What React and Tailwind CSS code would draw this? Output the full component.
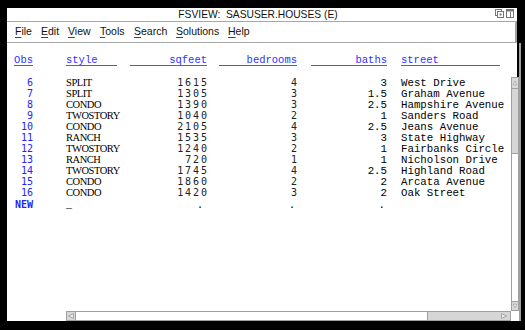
import React from "react";

const rows = [
  ["6", "SPLIT", "1615", "4", "3", "West Drive"],
  ["7", "SPLIT", "1305", "3", "1.5", "Graham Avenue"],
  ["8", "CONDO", "1390", "3", "2.5", "Hampshire Avenue"],
  ["9", "TWOSTORY", "1040", "2", "1", "Sanders Road"],
  ["10", "CONDO", "2105", "4", "2.5", "Jeans Avenue"],
  ["11", "RANCH", "1535", "3", "3", "State Highway"],
  ["12", "TWOSTORY", "1240", "2", "1", "Fairbanks Circle"],
  ["13", "RANCH", "720", "1", "1", "Nicholson Drive"],
  ["14", "TWOSTORY", "1745", "4", "2.5", "Highland Road"],
  ["15", "CONDO", "1860", "2", "2", "Arcata Avenue"],
  ["16", "CONDO", "1420", "3", "2", "Oak Street"],
];

const menu = [
  ["F", "ile", "w-[26px]"],
  ["E", "dit", "w-[27px]"],
  ["V", "iew", "w-[32px]"],
  ["T", "ools", "w-[34px]"],
  ["S", "earch", "w-[42px]"],
  ["S", "olutions", "w-[52px]"],
  ["H", "elp", "w-[30px]"],
];

const mono = "font-['Liberation_Mono',monospace]";
const sansMono = "font-['DejaVu_Sans_Mono',monospace]";

function Row({ r }) {
  return (
    <div className="flex h-[11px] items-baseline leading-[11px] text-black">
      <div className={`w-[26px] text-right text-[10px] text-[#2424ff] ${sansMono}`}>{r[0]}</div>
      <div className="ml-[33px] w-[51px] text-[10.5px] tracking-[-0.45px] font-['Liberation_Serif',serif]">{r[1]}</div>
      <div className={`ml-[13px] w-[77px] text-right text-[10px] text-[#222] ${sansMono}`}>
        <span className="tracking-[1.9px] mr-[-1.9px]">{r[2]}</span>
      </div>
      <div className={`ml-[12px] w-[78px] text-right text-[10px] text-[#222] ${sansMono}`}>
        <span className="tracking-[1.9px] mr-[-1.9px]">{r[3]}</span>
      </div>
      <div className={`ml-[14px] w-[76px] text-right text-[10.75px] ${mono}`}>{r[4]}</div>
      <div className={`ml-[14px] w-[110px] whitespace-nowrap text-[10.75px] ${mono}`}>{r[5]}</div>
    </div>
  );
}

function Arrow({ dir }) {
  const pts = {
    up: "1.5,6.5 4,1.5 6.5,6.5",
    down: "1.5,1.5 4,6.5 6.5,1.5",
    left: "6.5,1.5 1.5,4 6.5,6.5",
    right: "1.5,1.5 6.5,4 1.5,6.5",
  }[dir];
  return (
    <svg width="8" height="8" viewBox="0 0 8 8">
      <polygon points={pts} fill="#e8e8e8" stroke="#9a9a9a" strokeWidth="0.8" />
    </svg>
  );
}

export default function App() {
  return (
    <div className="w-[525px] h-[330px] bg-black pt-[8px] pl-[7px] font-['Liberation_Sans',Arial,sans-serif]">
      <div className="w-[510px] h-[313px] bg-white flex flex-col">
        {/* Title bar */}
        <div className="h-[13px] flex items-center relative">
          <div className="flex-1 text-center pr-[8px] text-[10.25px] leading-[13px] text-[#111] whitespace-pre">
            FSVIEW:  SASUSER.HOUSES (E)
          </div>
          <div className="absolute right-[3px] top-[1px] flex gap-[2px]">
            <svg width="9" height="9" viewBox="0 0 9 9">
              <rect x="0.5" y="0.5" width="6" height="6" fill="none" stroke="#777" />
              <rect x="2.5" y="2.5" width="6" height="6" fill="#fff" stroke="#777" />
              <rect x="4.5" y="4.5" width="2" height="2" fill="#777" />
            </svg>
            <svg width="8" height="9" viewBox="0 0 8 9">
              <rect x="0.5" y="0.5" width="7" height="8" fill="none" stroke="#777" />
              <rect x="0.5" y="0.5" width="7" height="2" fill="#777" />
              <rect x="4" y="3" width="1" height="5" fill="#777" />
            </svg>
          </div>
        </div>
        <div className="h-[1px] bg-[#a8a8a8]" />
        {/* Menu bar */}
        <div className="h-[20px] flex items-center pl-[8px] text-[10.5px] text-[#111] border-r-2 border-[#a0a0a0]">
          {menu.map(([a, b], i) => (
            <div key={i} className={menu[i][2]}>
              <span className="underline underline-offset-[2px] decoration-[#444]">{a}</span>
              {b}
            </div>
          ))}
        </div>
        <div className="h-[1px] bg-[#a8a8a8]" />
        {/* Body */}
        <div className="flex-1 flex flex-row min-h-0">
          <div className="flex-1 flex flex-col">
            <div className="flex-1 pt-[13px]">
              {/* header */}
              <div className={`flex h-[10px] leading-[9px] text-[10.5px] text-[#3030ff] ${mono}`}>
                <div className="w-[26px] flex justify-end">
                  <span className="border-b border-[#5050ff] h-[10px]">Obs</span>
                </div>
                <div className="ml-[33px] w-[51px] border-b border-[#5050ff]">style</div>
                <div className="ml-[13px] w-[77px] text-right border-b border-[#5050ff]">sqfeet</div>
                <div className="ml-[12px] w-[78px] text-right border-b border-[#5050ff]">bedrooms</div>
                <div className="ml-[14px] w-[76px] text-right border-b border-[#5050ff]">baths</div>
                <div className="ml-[14px] w-[99px] border-b border-[#5050ff]">street</div>
              </div>
              <div className="mt-[11px]">
                {rows.map((r, i) => (
                  <Row key={i} r={r} />
                ))}
                <div className="flex h-[11px] mt-[1px] items-baseline leading-[11px] text-black">
                  <div className={`w-[26px] text-right text-[10px] font-bold text-[#2424ff] ${sansMono}`}>NEW</div>
                  <div className={`ml-[33px] w-[51px] text-[10px] ${mono}`}>_</div>
                  <div className={`ml-[13px] w-[77px] text-right text-[10px] pr-[4px] ${sansMono}`}>.</div>
                  <div className={`ml-[12px] w-[78px] text-right text-[10px] pr-[2px] ${sansMono}`}>.</div>
                  <div className={`ml-[14px] w-[76px] text-right text-[10.75px] pr-[2px] ${mono}`}>.</div>
                </div>
              </div>
            </div>
            {/* horizontal scrollbar */}
            <div className="h-[10px] ml-[59px] flex border border-[#a0a0a0]">
              <div className="w-[9px] bg-[#d8d8d8] flex items-center justify-center border-r border-[#a0a0a0]">
                <Arrow dir="left" />
              </div>
              <div className="w-[352px] bg-white border-r border-[#a0a0a0]" />
              <div className="flex-1 bg-[#d6d6d6] flex items-center justify-end pr-[2px]">
                <Arrow dir="right" />
              </div>
            </div>
          </div>
          {/* vertical scrollbar column */}
          <div className="w-[10px] flex flex-col border-r-2 border-[#a0a0a0]">
            <div className="h-[34px]" />
            <div className="flex-1 flex flex-col border border-[#a0a0a0] w-[8px]">
              <div className="h-[11px] bg-[#d8d8d8] flex items-center justify-center border-b border-[#a0a0a0]">
                <Arrow dir="up" />
              </div>
              <div className="h-[64px] bg-[#d6d6d6]" />
              <div className="flex-1 bg-white border-t border-[#a0a0a0]" />
              <div className="h-[9px] bg-[#d8d8d8] flex items-center justify-center border-t border-[#a0a0a0]">
                <Arrow dir="down" />
              </div>
            </div>
            <div className="h-[10px] bg-white" />
          </div>
        </div>
      </div>
    </div>
  );
}
